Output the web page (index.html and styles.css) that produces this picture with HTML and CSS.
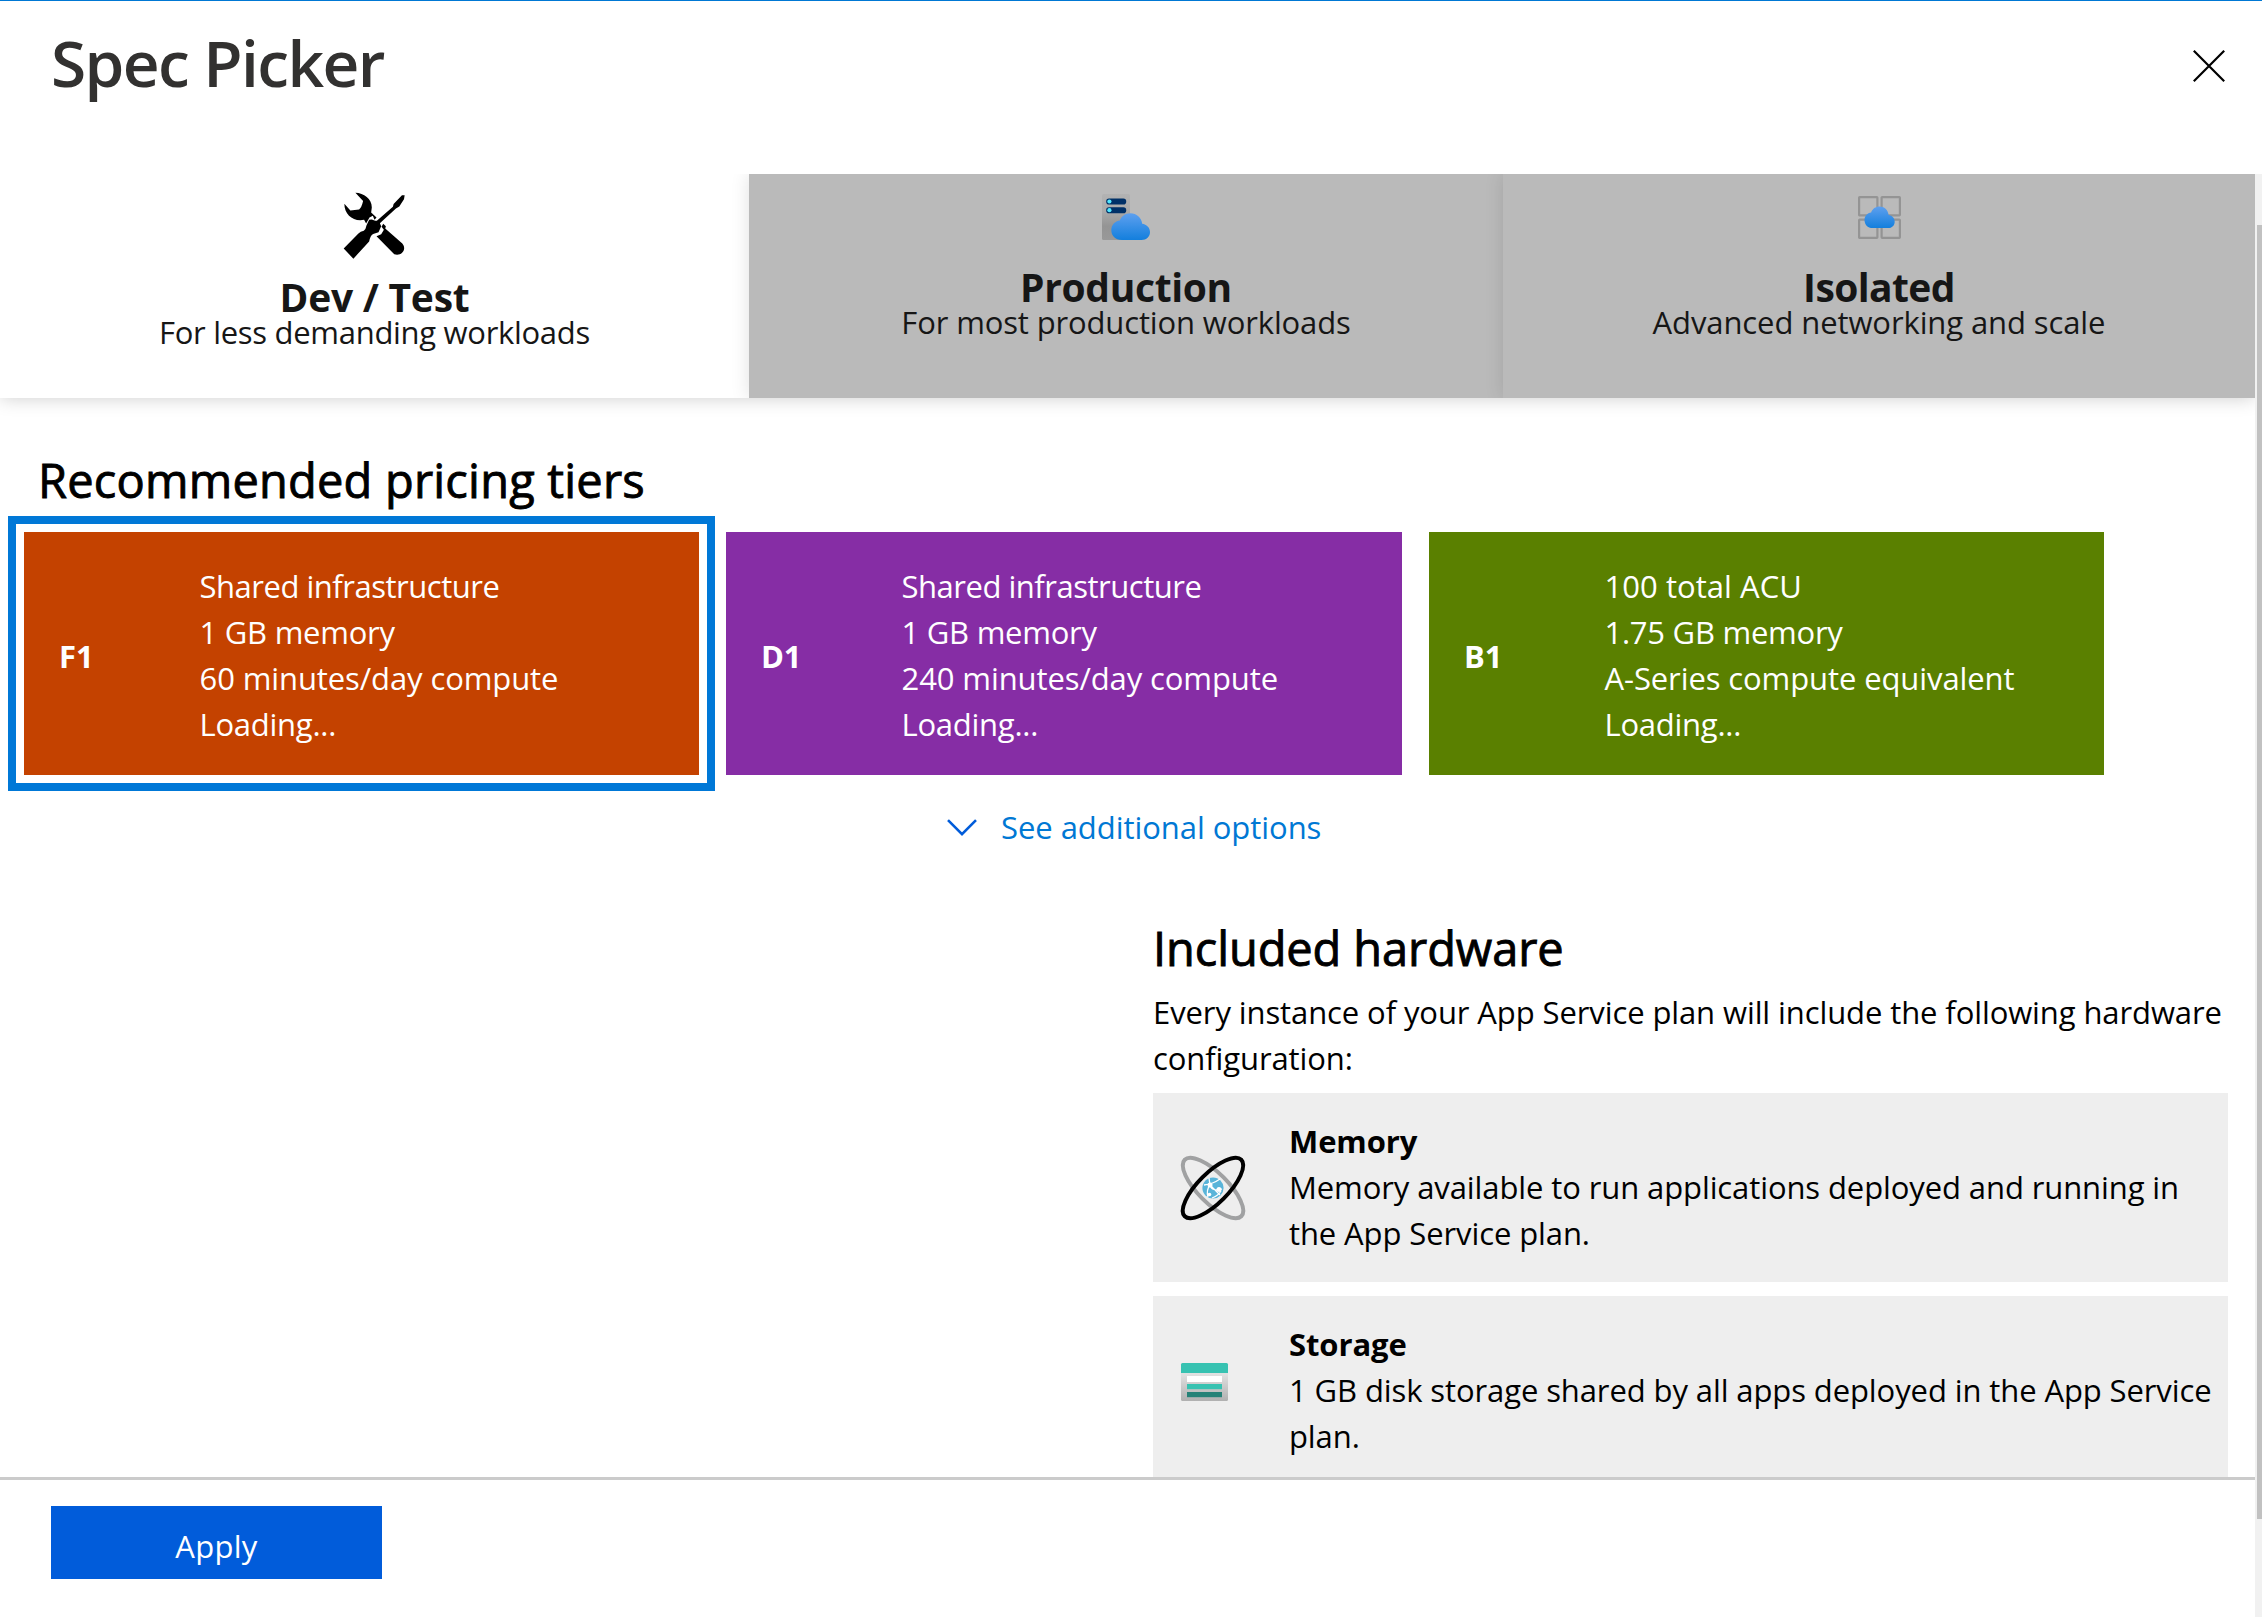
FILE: index.html
```html
<!DOCTYPE html>
<html lang="en">
<head>
<meta charset="utf-8">
<title>Spec Picker</title>
<link rel="stylesheet" href="styles.css">
</head>
<body>
<header class="header">
  <h1 class="title">Spec Picker</h1>
  <svg class="close" viewBox="0 0 32 32"><path d="M.8.8 31.2 31.2M31.2.8.8 31.2" fill="none" stroke="#000" stroke-width="2.2"/></svg>
</header>
<div class="main">
  <div class="scroll">
    <nav class="tabs">
      <div class="tab active">
        <svg class="ic-tools" viewBox="38 36 188 200">
          <path d="M75 38C100 39 124 56 124 82L122 97 138 112 132 119 127 107 117 112 107 130 101 119C70 126 42 104 42 71L60 91 86 88Q93 84 98 63Z"/>
          <path d="M158 131L166 138 164 145 215 190C230 208 212 229 191 222L138 168 152 162 160 149 153 140Z"/>
          <path d="M40 205L84 160Q90 154 100 152 106 148 108 136L116 119 124 118 134 122 139 122 187 80 189 72 214 46 222 46 220 58 206 79 196 85 148 129 152 138 144 156 128 161Q119 166 116 184L69 235Z"/>
        </svg>
        <h2 class="tab-title dev">Dev / Test</h2>
        <p class="tab-sub dev-sub">For less demanding workloads</p>
      </div>
      <div class="tab">
        <svg class="ic-prod" viewBox="0 0 48 46">
          <defs>
            <linearGradient id="srv" x1="0" y1="0" x2="0" y2="1"><stop offset="0" stop-color="#b3b3b3"/><stop offset=".4" stop-color="#a8a8a8"/><stop offset=".7" stop-color="#949494"/><stop offset="1" stop-color="#999"/></linearGradient>
            <linearGradient id="cl" x1="0" y1="0" x2="0" y2="1"><stop offset="0" stop-color="#5ea0ef"/><stop offset="1" stop-color="#137fdd"/></linearGradient>
          </defs>
          <rect width="28" height="46" rx="1.5" fill="url(#srv)"/>
          <rect x="4.2" y="4.5" width="20" height="6" rx="2.8" fill="#003067"/><rect x="4.2" y="13.2" width="20" height="6" rx="2.8" fill="#003067"/>
          <circle cx="7.4" cy="7.5" r="2.1" fill="#50e6ff"/><circle cx="7.4" cy="16.2" r="2.1" fill="#50e6ff"/>
          <path d="M20 46C13 46 9.300 41.500 9.300 36 9.300 31 13 27 17.800 26.500 19.500 22 23.500 19.200 28.500 19.200 34.500 19.200 39.500 23.500 40.200 29.700 44.500 30.200 48 33.500 48 38 48 42.500 44.500 46 39.500 46Z" fill="url(#cl)"/>
        </svg>
        <h2 class="tab-title prod">Production</h2>
        <p class="tab-sub prod-sub">For most production workloads</p>
      </div>
      <div class="tab">
        <svg class="ic-iso" viewBox="0 0 43 43">
          <g fill="none" stroke="#949494" stroke-width="2.2"><rect x="1.100" y="1.100" width="18.300" height="18.300" rx=".6"/><rect x="23.600" y="1.100" width="18.300" height="18.300" rx=".6"/><rect x="1.100" y="23.600" width="18.300" height="18.300" rx=".6"/><rect x="23.600" y="23.600" width="18.300" height="18.300" rx=".6"/></g>
          <path transform="translate(6.500 10.500) scale(.78 .805) translate(-9.300 -19.200)" d="M20 46C13 46 9.300 41.500 9.300 36 9.300 31 13 27 17.800 26.500 19.500 22 23.500 19.200 28.500 19.200 34.500 19.200 39.500 23.500 40.200 29.700 44.500 30.200 48 33.500 48 38 48 42.500 44.500 46 39.500 46Z" fill="url(#cl)"/>
        </svg>
        <h2 class="tab-title iso">Isolated</h2>
        <p class="tab-sub iso-sub">Advanced networking and scale</p>
      </div>
    </nav>
    <h3 class="section-title recommended">Recommended pricing tiers</h3>
    <div class="tiers">
      <div class="tier selected"><b>F1</b><ul><li class="tight">Shared infrastructure</li><li class="snug">1 GB memory</li><li>60 minutes/day compute</li><li class="snug">Loading...</li></ul></div>
      <div class="tier purple"><b>D1</b><ul><li class="tight">Shared infrastructure</li><li class="snug">1 GB memory</li><li>240 minutes/day compute</li><li class="snug">Loading...</li></ul></div>
      <div class="tier green"><b>B1</b><ul><li class="loose">100 total ACU</li><li class="snug">1.75 GB memory</li><li>A-Series compute equivalent</li><li class="snug">Loading...</li></ul></div>
    </div>
    <div class="more"><svg viewBox="0 0 30 17"><path d="M1 1.200 15 15.200 29 1.200" fill="none" stroke="#015cda" stroke-width="2.600"/></svg><span>See additional options</span></div>
    <section class="hardware">
      <h3 class="section-title">Included hardware</h3>
      <p class="intro">Every instance of your App Service plan will include the following hardware<br>configuration:</p>
      <div class="hw">
        <svg class="ic-mem" viewBox="-33 -33 66 66">
          <g fill="none" stroke-width="4"><ellipse rx="40" ry="15" transform="rotate(45)" stroke="#a0a1a2"/><ellipse rx="40" ry="15" transform="rotate(-45)" stroke="#000"/></g>
          <circle r="10.600" fill="#59b4d9"/>
          <g fill="none" stroke="#fff" stroke-width="1.300"><path d="M-9-3Q0-4 7-9M-3-3Q-1 4 9 1M-3-3Q-7 2-5 9M-4-10-3-3 7 7M-1 10Q5 8 8 3"/></g>
          <g fill="#fff"><circle cx="-3" cy="-3" r="2.500"/><circle cx="6" cy="1.500" r="2.500"/><circle cx="-3.500" cy="6.500" r="1.800"/></g>
        </svg>
        <div><h4>Memory</h4><p>Memory available to run applications deployed and running in<br>the App Service plan.</p></div>
      </div>
      <div class="hw">
        <svg class="ic-sto" viewBox="0 0 47 38">
          <defs><linearGradient id="st" x1="0" y1="0" x2="0" y2="1"><stop offset="0" stop-color="#e6e6e6"/><stop offset=".3" stop-color="#e0e0e0"/><stop offset="1" stop-color="#b0b0b0"/></linearGradient></defs>
          <rect width="47" height="38" rx="1.500" fill="url(#st)"/><path d="M0 10V1.500Q0 0 1.500 0H45.500Q47 0 47 1.500V10Z" fill="#37c2b1"/>
          <rect x="6" y="13" width="35" height="6" fill="#fff"/><rect x="6" y="21" width="35" height="5.200" fill="#37c2b1"/><rect x="6" y="29" width="35" height="5.200" fill="#258277"/>
        </svg>
        <div><h4>Storage</h4><p>1 GB disk storage shared by all apps deployed in the App Service<br>plan.</p></div>
      </div>
    </section>
  </div>
  <footer class="footer"><button class="apply">Apply</button></footer>
  <div class="bar"><div class="thumb"></div></div>
</div>
</body>
</html>
```
FILE: styles.css
```css
* { box-sizing: border-box; }
body { margin: 0; width: 2262px; height: 1617px; overflow: hidden; display: flex; flex-direction: column; background: #fff; color: #000; font: 400 31px/46px "Open Sans", "Noto Sans", sans-serif; border-top: 1px solid #0078d4; }
h1, h2, h3, h4, p, ul { margin: 0; padding: 0; list-style: none; white-space: nowrap; }
svg { display: block; flex: none; overflow: visible; }

.header { height: 173px; flex: none; display: flex; justify-content: space-between; padding: 0 37px 0 50px; }
.title { font-size: 64px; line-height: 80px; font-weight: 600; letter-spacing: -1.6px; color: #323130; padding: 22px 0 0 1px; }
.close { width: 32px; height: 32px; margin-top: 49px; }

.main { flex: 1; display: grid; grid-template-columns: 2255px 7px; grid-template-rows: 1303px 140px; }
.scroll { overflow: hidden; }

.tabs { display: grid; grid-template-columns: 749px 754px 752px; height: 224px; box-shadow: 0 0 18px rgba(0, 0, 0, .2); }
.tab { display: flex; flex-direction: column; align-items: center; background: #bababa; color: #161616; box-shadow: 0 0 18px rgba(0, 0, 0, .12); clip-path: inset(0 0 0 -18px); }
.tab.active { background: #fff; box-shadow: none; }
.ic-tools { width: 63px; height: 67px; margin: 18px 0 21px; }
.ic-prod { width: 48px; height: 46px; margin: 20px 0 30px; }
.ic-iso { width: 43px; height: 43px; margin: 22px 0 31px; }
.tab-title { font-size: 39px; font-weight: 700; line-height: 34px; }
.tab-sub { line-height: 34px; margin-top: 1px; }
.dev { letter-spacing: -.25px; }
.prod { letter-spacing: -.35px; }
.iso { letter-spacing: -.6px; }
.dev-sub { letter-spacing: -.3px; }
.prod-sub { letter-spacing: -.14px; }
.iso-sub { letter-spacing: -.1px; }

.section-title { font-size: 47px; font-weight: 400; line-height: 64px; letter-spacing: -.1px; -webkit-text-stroke: .9px currentColor; }
.recommended { margin: 50px 0 0 38px; letter-spacing: .2px; }

.tiers { display: grid; grid-template-columns: 675px 676px 675px; gap: 27px; padding: 20px 0 0 24px; }
.tier { height: 243px; display: flex; background: #c44200; color: #fff; padding: 31px 0 0 35px; letter-spacing: -.1px; }
.tier.selected { outline: 8px solid #0078d7; outline-offset: 8px; }
.tier.purple { background: #862da5; }
.tier.green { background: #5a8000; }
.tier b { width: 140.500px; padding-top: 70px; }
.tight { letter-spacing: -.48px; }
.snug { letter-spacing: -.25px; }
.loose { letter-spacing: .05px; }

.more { display: flex; align-items: center; color: #0078d4; margin: 29px 0 0 947px; gap: 24px; letter-spacing: -.05px; }
.more svg { width: 30px; height: 17px; }

.hardware { margin: 66px 27px 0 1153px; letter-spacing: -.1px; }
.hardware .section-title { margin-bottom: 9px; }
.intro { margin-bottom: 12px; }
.hw { background: #eee; height: 189px; margin-bottom: 14px; padding: 25px 0 0 27px; display: flex; }
.ic-mem { width: 66px; height: 66px; margin: 37px 43px 0 0; }
.ic-sto { width: 47px; height: 38px; margin: 42px 61px 0 1px; }

.footer { border-top: 3px solid #cbcbcb; padding: 26px 0 0 51px; }
.apply { display: block; width: 331px; height: 73px; border: 0; padding: 6px 0 0; background: #015cda; color: #fff; font: inherit; letter-spacing: .3px; }

.bar { grid-column: 2; grid-row: 1 / 3; background: #f1f1f1; padding: 51px 0 0 2px; }
.thumb { height: 1294px; background: #c1c1c1; }
```
